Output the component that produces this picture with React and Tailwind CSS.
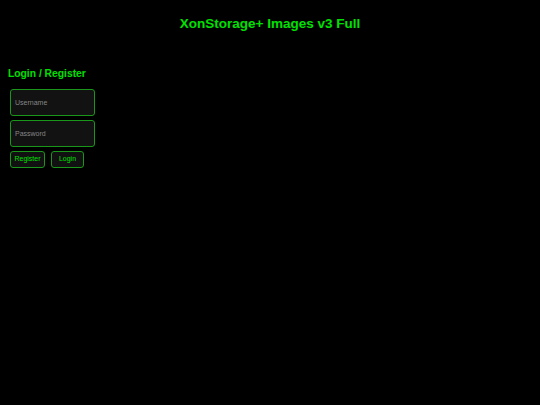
export default function App() {
  return (
    <div className="min-h-[405px] bg-black text-[#00e000] font-['Liberation_Sans',Arial,sans-serif]">
      <h1 className="pt-[15px] text-center text-[13.5px] font-bold leading-[18px]">XonStorage+ Images v3 Full</h1>
      <div className="px-[8px] pt-[34px]">
        <h2 className="text-[10.3px] font-bold leading-[14px]">Login / Register</h2>
        <div className="mt-[8px] ml-[2px] flex flex-col gap-[4px]">
          <input
            placeholder="Username"
            className="w-[85px] h-[27px] px-[4px] rounded-[3px] border border-[#1a961a] bg-[#121212] text-[7px] text-[#cccccc] placeholder-[#858585] outline-none"
          />
          <input
            type="password"
            placeholder="Password"
            className="w-[85px] h-[27px] px-[4px] rounded-[3px] border border-[#1a961a] bg-[#121212] text-[7px] text-[#cccccc] placeholder-[#858585] outline-none"
          />
          <div className="flex gap-[6px]">
            <button className="w-[35px] h-[17px] rounded-[3px] border border-[#1a961a] bg-[#111111] text-[7px] text-[#00e000]">Register</button>
            <button className="w-[33px] h-[17px] rounded-[3px] border border-[#1a961a] bg-[#111111] text-[7px] text-[#00e000]">Login</button>
          </div>
        </div>
      </div>
    </div>
  );
}
